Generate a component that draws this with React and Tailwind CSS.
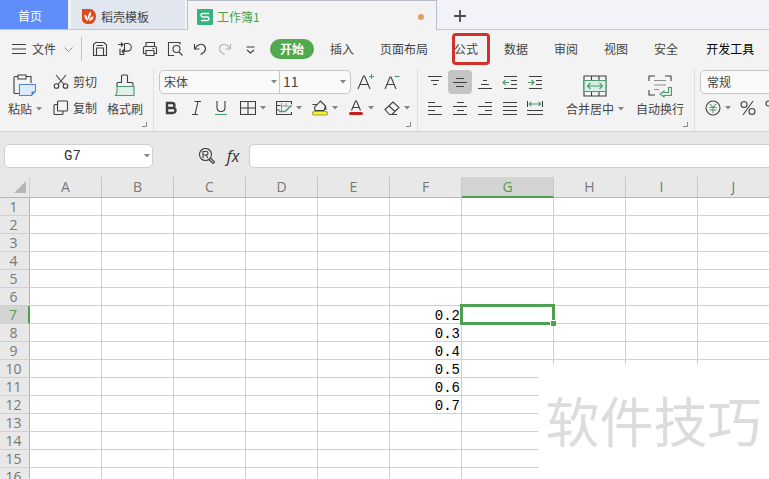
import clsx from 'clsx';

const columns = ['A', 'B', 'C', 'D', 'E', 'F', 'G', 'H', 'I', 'J'];
const rows = Array.from({ length: 16 }, (_, i) => i + 1);
const cells = { F7: '0.2', F8: '0.3', F9: '0.4', F10: '0.5', F11: '0.6', F12: '0.7' };
const active = { col: 'G', row: 7 };

const menus = ['插入', '页面布局', '公式', '数据', '审阅', '视图', '安全'];

const Icon = ({ w = 16, h = 16, children }) => (
  <svg width={w} height={h} viewBox={`0 0 ${w} ${h}`} fill="none" stroke="#3f3f3f" strokeWidth="1.1" className="shrink-0" aria-hidden="true">
    {children}
  </svg>
);

const Caret = () => (
  <svg width="6" height="4" viewBox="0 0 6 4" fill="#858585" className="shrink-0" aria-hidden="true">
    <path d="M0 0h6L3 3.6z" />
  </svg>
);

const Corner = () => (
  <svg width="5" height="5" viewBox="0 0 5 5" fill="none" stroke="#8a8a8a" className="absolute right-1.5 bottom-1" aria-hidden="true">
    <path d="M4.5 0v4.5H0" />
  </svg>
);

const quickTools = [
  { label: '保存', icon: <path d="M2.5 14.5h-1v-11l2-2H12l2.5 2.5v10.5h-1zM4.5 14.5V7h7v7.5M4.5 4.5H11" /> },
  { label: '输出', icon: <path d="M1 3.5h5M4 1.5l2 2-2 2M7.5 2.5h3a3.8 3.8 0 0 1 0 7.6H5M7.5 2.5v8.500M7.5 8L5 10.500 7.500 13M3 7.500v6h4" /> },
  { label: '打印', icon: <path d="M4 5V1.5h8.500V5M4 12.500H1.500V7q0-1.500 1.500-1.500h10q1.500 0 1.500 1.500v5.500H12M4 9.500h8v5H4zM10.500 7.500h2" /> },
  { label: '打印预览', icon: <path d="M7 14.5H1.5v-13h11.500v2M12 11l3.500 3.500M13 8a3.500 3.500 0 1 1-7 0 3.500 3.500 0 0 1 7 0M1.500 1.500h2" /> },
  { label: '撤销', icon: <path d="M2.5 3v5h5M2.8 7.7C5 3.5 9 2.5 11.5 4c3.5 2.5 2.5 7-3 9.5" /> },
  { label: '恢复', icon: <path stroke="#b5b5b5" d="M13.5 3v5h-5M13.2 7.7C11 3.5 7 2.5 4.5 4c-3.5 2.5-2.5 7 3 9.5" /> },
  { label: '更多', icon: <path d="M4.5 6h8M5 9l3.5 3L12 9" /> },
];

const alignRows = [
  [
    { label: '顶端对齐', icon: <path d="M1 2.5h14M4 6.5h8M6 10.5h4" /> },
    { label: '垂直居中', icon: <path d="M4 4.5h8M1 8.5h14M4 12.5h8" />, on: true },
    { label: '底端对齐', icon: <path d="M6 6.5h4M4 10.5h8M1 14.5h14" /> },
    { label: '减少缩进', icon: <><path d="M2 2.5h13M9 6.5h6M9 10.5h6M2 14.5h13" /><path stroke="#4d9a73" d="M7 8.5H1M3.5 6L1 8.5 3.5 11" /></> },
    { label: '增加缩进', icon: <><path d="M2 2.5h13M9 6.5h6M9 10.5h6M2 14.5h13" /><path stroke="#4d9a73" d="M1 8.5h6M4.5 6L7 8.5 4.5 11" /></> },
  ],
  [
    { label: '左对齐', icon: <path d="M1 2.5h7M1 6.5h14M1 10.5h7M1 14.5h14" /> },
    { label: '居中', icon: <path d="M5 2.5h7M1 6.5h14M5 10.5h7M1 14.5h14" /> },
    { label: '右对齐', icon: <path d="M8 2.5h7M1 6.5h14M8 10.5h7M1 14.5h14" /> },
    { label: '两端对齐', icon: <path d="M1 2.5h14M1 6.5h14M1 10.5h14M1 14.5h14" /> },
    { label: '分散对齐', icon: <><path d="M.5 1v6M15.5 1v6M0 10.5h16M0 14.5h16" /><path stroke="#4d9a73" d="M2 4h12M4.500 1.8L2.3 4l2.2 2.2M11.5 1.8L13.7 4l-2.2 2.2" /></> },
  ],
];

const dropTools = [
  { label: '边框', icon: <path d="M.5 1.5h15v13H.5zM8 1.5v13M.5 8h15" /> },
  { label: '绘图边框', icon: <><path d="M15.5 4V1.5H.5v13h15V12M.5 5.500h4M.5 10h3" /><path stroke="#999" d="M5.5 3v8M10 3v4M5 6h8" /><path stroke="#4d9a73" strokeWidth="1.5" d="M16 5L9 11.500H3" /></> },
  { label: '填充颜色', icon: <><path d="M3 10.5L2.5 7.5 8.5 1l5 5-1.500 4.500zM.5 4.5h5M13.5 6l.5 4" /><rect x=".5" y="11.5" width="15" height="3.5" rx="1.7" fill="#f5ef34" stroke="#a5a238" /></> },
  { label: '字体颜色', icon: <><path d="M3.5 10.5L7.5 1h1l4 9.500M5 7.500h6" /><path stroke="#c81e1e" strokeWidth="3" strokeLinecap="round" d="M2.5 13.5h11" /></> },
  { label: '清除', icon: <path d="M1 9.5L9 2l6 5.500-7 7H5.500zM5 6l6 5.500M8 14.500h5" /> },
];

function TabBar() {
  return (
    <nav className="flex h-[30px] shrink-0 border-b border-[#c3c7d0] bg-[#f1f3f8]">
      <button className="mr-[3px] w-[68px] shrink-0 bg-[#5f8dfa] pt-0.5 pr-2 text-white">首页</button>
      <button className="flex w-[114px] shrink-0 items-center gap-[5px] bg-[#e2e6ef] pt-1 pl-[11px]">
        <svg width="14" height="15" viewBox="0 0 14 15" aria-hidden="true">
          <path d="M0 0h8a6 7.5 0 0 1 0 15H5a5 5 0 0 1-5-5z" fill="#dc4a22" />
          <path d="M6 12C3 10.5 2 8 2.7 5.5c1.6.8 2.5 2 2.9 3.5zM6.5 11C5.5 7.5 6.5 4 9 2.5c.5 3-.8 5.5-2.5 8.5zM7 12c.5-2.500 2-4.500 4.500-4.700C11.5 10 9.500 12 7 12z" fill="#fff" />
        </svg>
        稻壳模板
      </button>
      <button className="-mb-px ml-[2px] flex w-[250px] shrink-0 items-center gap-1 border border-b-0 border-[#b9bdcb] bg-[#f3f3f3] pt-0.5 pr-3 pl-[9px] text-[#4a9e4a]">
        <svg width="16" height="16" viewBox="0 0 16 16" aria-hidden="true">
          <rect width="16" height="16" rx="1" fill="#36b37e" />
          <path d="M12 4.5H6q-2 0-2 1.7T6 8h4q2 0 2 1.8t-2 1.7H4" fill="none" stroke="#fff" strokeWidth="1.3" />
        </svg>
        工作簿1
        <span className="ml-auto size-1.5 rounded-full bg-[#dd9f61]"></span>
      </button>
      <button aria-label="新建" className="w-[46px] shrink-0 pt-0.5">
        <svg width="12" height="12" viewBox="0 0 12 12" stroke="#4a4a4a" strokeWidth="1.8" className="mx-auto" aria-hidden="true">
          <path d="M6 0v12M0 6h12" />
        </svg>
      </button>
    </nav>
  );
}

function MenuBar() {
  return (
    <div className="flex h-[38px] shrink-0 items-center pl-3">
      <button className="flex items-center gap-1.5">
        <Icon w={14} h={10}><path d="M0 .5h14M0 5h14M0 9.5h14" /></Icon>
        文件
        <svg width="9" height="5" viewBox="0 0 9 5" fill="none" stroke="#8d8d8d" className="ml-0.5" aria-hidden="true">
          <path d="M.5 .5l4 4 4-4" />
        </svg>
      </button>
      <span className="ml-2 h-6 w-px shrink-0 bg-[#c4c4c4]"></span>
      <div className="ml-[5px] flex shrink-0">
        {quickTools.map((t) => (
          <button key={t.label} aria-label={t.label} className="flex w-[25px] justify-center">
            <Icon>{t.icon}</Icon>
          </button>
        ))}
      </div>
      <button className="ml-2 h-5 w-11 shrink-0 rounded-full bg-[#52a84f] font-bold text-white">开始</button>
      <div className="ml-4 flex shrink-0 gap-[26px]">
        {menus.map((m) => (
          <button key={m} className="relative">
            {m}
            {m === '公式' && (
              <span className="absolute -inset-y-2 -right-3 -left-0.5 rounded-[4px] border-[3px] border-[#d2302a]"></span>
            )}
          </button>
        ))}
      </div>
      <button className="ml-7 shrink-0 text-black">开发工具</button>
    </div>
  );
}

function Ribbon() {
  return (
    <div className="flex h-16 shrink-0 border-b border-[#d0d0d0] *:shrink-0">
      {/* clipboard */}
      <div className="relative flex w-[154px] border-r border-[#e0e0e0] pt-0.5">
        <button className="flex w-[50px] flex-col items-center justify-between pt-1 pb-3.5">
          <Icon w={24} h={24}>
            <path d="M5 2.5H2q-1 0-1 1v15q0 1 1 1h4M13 2.5h5V9M6.500 1h6.500v4H5V1z" />
            <path d="M6.5 10.5h16v7l-4 4h-12z" fill="#deebfb" stroke="#5585cf" />
            <path d="M22.5 17.5h-4v4z" fill="#5585cf" stroke="none" />
          </Icon>
          <span className="flex items-center gap-1">粘贴<Caret /></span>
        </button>
        <div className="flex w-[50px] flex-col gap-0.5 pl-[3px]">
          <button className="flex h-6 items-center gap-1 whitespace-nowrap">
            <Icon>
              <path d="M3 1l8 9.500M13 1L5 10.500" />
              <circle cx="3.5" cy="12" r="2.3" /><circle cx="12.5" cy="12" r="2.3" />
            </Icon>
            剪切
          </button>
          <button className="flex h-6 items-center gap-1 whitespace-nowrap">
            <Icon><path d="M5.5 1h8q1 0 1 1v8q0 1-1 1h-8q-1 0-1-1V2q0-1 1-1zM4.5 4.5H2q-1 0-1 1v8q0 1 1 1h7q1 0 1-1V11" /></Icon>
            复制
          </button>
        </div>
        <button className="flex w-[50px] flex-col items-center justify-between pt-1 pb-3.5">
          <Icon w={22} h={24}>
            <path d="M3 12.5v-3q0-1 1-1h3.500V2q0-1 1-1h4q1 0 1 1v6.500H18q1 0 1 1v3" />
            <path d="M3 12.5h17v9H1q2-1 2-4z" fill="#dff1e6" stroke="#4d9a73" />
          </Icon>
          格式刷
        </button>
        <Corner />
      </div>

      {/* font */}
      <div className="relative flex w-[264px] flex-col gap-0.5 border-r border-[#e0e0e0] pt-0.5 pl-[5px]">
        <div className="flex h-6 items-center">
          <div className="flex h-6 w-[192px] items-center rounded-[5px] border border-[#c6c6c6] bg-[#fafafa]">
            <select aria-label="字体" className="w-[111px] appearance-none pl-1 outline-none"><option>宋体</option></select>
            <Caret />
            <select aria-label="字号" className="ml-0.5 h-full w-[61px] appearance-none border-l border-[#c6c6c6] pb-0.5 pl-[3px] text-sm leading-4 outline-none"><option>11</option></select>
            <Caret />
          </div>
          <button aria-label="增大字号" className="ml-1.5 w-[27px]">
            <Icon w={18} h={18}><path d="M1 16L6.5 3h1L13 16M3 11.500h8" /><path stroke="#4d9a73" d="M12 3.5h5M14.5 1v5" /></Icon>
          </button>
          <button aria-label="减小字号" className="w-[26px]">
            <Icon w={18} h={18}><path d="M1 16L6 4h1l5 12M3 11.5h7" /><path stroke="#4d9a73" d="M10.5 3.5h5" /></Icon>
          </button>
        </div>
        <div className="flex h-6 items-center *:shrink-0">
          <button aria-label="加粗" className="w-[25px] pl-1"><Icon><path strokeWidth="2.4" d="M4 3h5a2.500 2.500 0 0 1 0 5H4zM4 8h6a2.500 2.500 0 0 1 0 5H4z" /></Icon></button>
          <button aria-label="倾斜" className="w-[25px] pl-1"><Icon><path d="M6.5 1.5H13M4 14.5h6M10 1.5l-3 13" /></Icon></button>
          <button aria-label="下划线" className="w-[25px] pl-1"><Icon><path d="M4 1v6.5q0 4 4 4t4-4V1" /><path stroke="#4d9a73" d="M2 14.5h12" /></Icon></button>
          <div className="ml-1.5 flex">
            {dropTools.map((t) => (
              <button key={t.label} aria-label={t.label} className="flex w-9 items-center gap-1">
                <Icon>{t.icon}</Icon>
                <Caret />
              </button>
            ))}
          </div>
        </div>
        <Corner />
      </div>

      {/* alignment */}
      <div className="relative flex w-[277px] border-r border-[#e0e0e0] pt-0.5 pl-[5px]">
        <div className="flex flex-col gap-0.5">
          {alignRows.map((group, i) => (
            <div key={i} className="flex gap-px">
              {group.map((t) => (
                <button key={t.label} aria-label={t.label} className={clsx('flex size-6 items-center justify-center rounded-[4px]', t.on && 'bg-[#c4c4c4]')}>
                  <Icon>{t.icon}</Icon>
                </button>
              ))}
            </div>
          ))}
        </div>
        <button className="ml-[18px] flex w-[60px] flex-col items-center justify-between pt-1 pb-3.5">
          <Icon w={24} h={24}>
            <path d="M1 2h22v20H1zM8.5 2v5M16 2v5M8.5 17v5M16 17v5" />
            <path d="M1 6.5h22v11H1z" fill="#d9efe1" stroke="#4d9a73" />
            <path stroke="#4d9a73" d="M4.5 12h15M7.5 9l-3 3 3 3M16.5 9l3 3-3 3" />
          </Icon>
          <span className="flex items-center gap-1 whitespace-nowrap">合并居中<Caret /></span>
        </button>
        <button className="ml-[5px] flex w-[60px] flex-col items-center justify-between pt-1 pb-3.5">
          <Icon w={24} h={24}>
            <path d="M1 7V2h6M17 2h6v5M1 16v5h6" />
            <path stroke="#8d8d8d" d="M6 6.5h12M6 11h12M6 15.5h5" />
            <path d="M20.5 13.5h3v8H16V23l-4-3 4-3v1.5h4.5z" fill="#d9efe1" stroke="#4d9a73" />
          </Icon>
          自动换行
        </button>
        <Corner />
      </div>

      {/* number format */}
      <div className="flex flex-col gap-0.5 pt-0.5 pl-[5px]">
        <select aria-label="数字格式" className="h-6 w-[140px] appearance-none rounded-[5px] border border-[#c6c6c6] bg-[#fafafa] pl-1.5 outline-none">
          <option>常规</option>
        </select>
        <div className="flex h-6 items-center pl-[5px]">
          <button aria-label="货币" className="flex w-[35px] items-center gap-1">
            <Icon>
              <circle cx="8" cy="8" r="7" />
              <path stroke="#4d9a73" d="M5 4l3 3.5L11 4M8 7.5V13M4.5 7.5h7M4.5 10h7" />
            </Icon>
            <Caret />
          </button>
          <button aria-label="百分比" className="w-[25px]">
            <Icon><circle cx="4" cy="4.5" r="3" /><circle cx="12" cy="11.5" r="3" /><path d="M13 1L3 15" /></Icon>
          </button>
          <button aria-label="千位分隔" className="w-4">
            <Icon><circle cx="3.5" cy="3.5" r="2.5" /><circle cx="10.5" cy="3.5" r="2.5" /><path d="M6 9v4" /></Icon>
          </button>
        </div>
      </div>
    </div>
  );
}

function FormulaBar() {
  return (
    <div className="flex h-[45px] shrink-0 items-center pt-0.5 pl-1">
      <div className="flex h-6 w-[149px] shrink-0 items-center rounded-[5px] border border-[#cfcfcf] bg-white pr-0.5">
        <input aria-label="名称框" defaultValue="G7" className="min-w-0 flex-1 pr-1 text-center font-['Liberation_Mono',monospace] text-sm leading-4 text-[#333] outline-none" />
        <Caret />
      </div>
      <button aria-label="查找" className="ml-[45px]">
        <Icon w={18} h={18}>
          <circle cx="7.5" cy="7.5" r="6" />
          <path d="M12.5 11l4 4-1.500 1.500-4-4" />
          <path d="M5 11V4.5h3.500q1.500 0 1.500 1.700T8.500 8H5M8 8l2 3" />
        </Icon>
      </button>
      <button aria-label="插入函数" className="ml-[7px] w-5 font-['Open_Sans',sans-serif] text-base leading-4 text-[#333] italic">fx</button>
      <input aria-label="编辑栏" className="ml-1.5 h-6 min-w-0 flex-1 rounded-l-[5px] border border-r-0 border-[#cfcfcf] bg-white px-2 outline-none" />
    </div>
  );
}

function Sheet() {
  return (
    <table className="w-full table-fixed border-separate border-spacing-0 font-['Open_Sans',sans-serif] text-sm leading-4 text-[#777]">
      <colgroup>
        <col className="w-[30px]" />
        {columns.map((c) => (
          <col key={c} className={c === 'J' ? '' : c === active.col ? 'w-[92px]' : 'w-[72px]'} />
        ))}
      </colgroup>
      <thead>
        <tr className="h-[21px]">
          <th className="border-r border-b border-[#b5b5b5] border-r-[#cfcfcf] bg-[#e8e8e8] p-0 pl-2.5">
            <svg width="12" height="12" viewBox="0 0 12 12" fill="#b5b5b5" className="mx-auto" aria-hidden="true"><path d="M12 0v12H0z" /></svg>
          </th>
          {columns.map((c) => (
            <th
              key={c}
              scope="col"
              className={clsx(
                'border-r p-0 font-normal',
                c === active.col ? 'border-b-2 border-[#4f9f50] border-r-[#c6c6c6] bg-[#d4d4d4] text-[#4f9f50]' : 'border-b border-[#b5b5b5] border-r-[#c6c6c6] bg-[#e8e8e8]',
                c === 'J' && 'border-r-0'
              )}
            >
              {c}
            </th>
          ))}
        </tr>
      </thead>
      <tbody>
        {rows.map((r) => (
          <tr key={r} className="h-[18px]">
            <th
              scope="row"
              className={clsx(
                'border-b border-[#d0d0d0] p-0 pr-0.5 font-normal',
                r === active.row ? 'border-r-2 border-r-[#4f9f50] bg-[#d4d4d4] text-[#4f9f50]' : 'border-r border-r-[#b5b5b5] bg-[#e8e8e8]'
              )}
            >
              {r}
            </th>
            {columns.map((c) => (
              <td
                key={c}
                className={clsx(
                  "relative border-b border-[#d0d0d0] bg-white p-0 pt-[3px] pr-px text-right font-['Liberation_Mono',monospace] leading-[14px] text-black",
                  c !== 'J' && 'border-r'
                )}
              >
                {cells[c + r]}
                {c === active.col && r === active.row && (
                  <span className="absolute -inset-0.5 z-10 border-[3px] border-[#4f9f50]">
                    <span className="absolute -right-1 -bottom-1 size-1.5 border-t border-l border-white bg-[#4f9f50]"></span>
                  </span>
                )}
              </td>
            ))}
          </tr>
        ))}
      </tbody>
    </table>
  );
}

export default function App() {
  return (
    <div className="relative flex h-screen flex-col overflow-hidden bg-[#e8e8e8] font-['Noto_Sans_CJK_SC',sans-serif] text-xs leading-4 text-[#444]">
      <TabBar />
      <div className="shrink-0 overflow-hidden bg-[#f3f3f3]">
        <MenuBar />
        <Ribbon />
      </div>
      <FormulaBar />
      <main className="min-h-0 flex-1 overflow-hidden bg-white">
        <Sheet />
      </main>
      <div className="absolute right-0 bottom-0 z-20 flex h-[115px] w-[231px] items-center justify-center bg-white pb-1 text-[54px] leading-none text-[#dcdcdc]">
        软件技巧
      </div>
    </div>
  );
}
